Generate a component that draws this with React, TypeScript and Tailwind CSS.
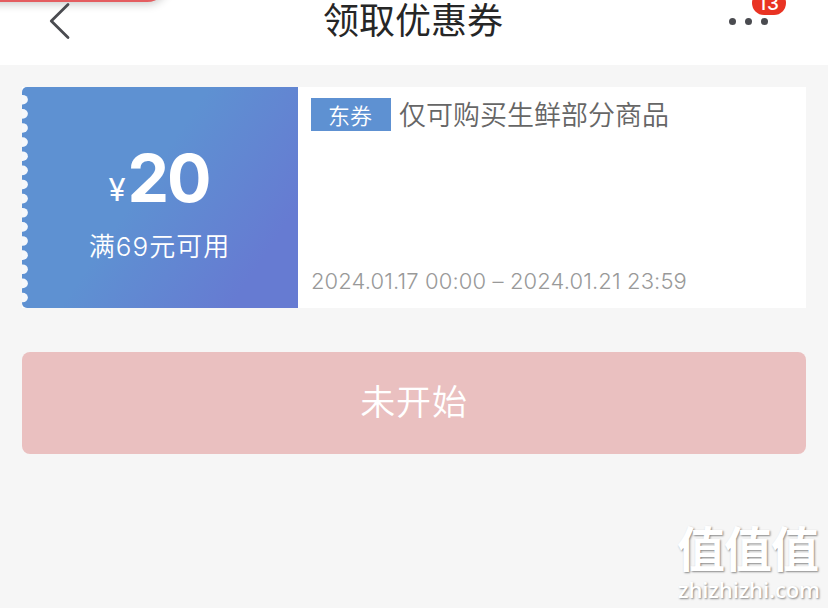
const notches = Array.from({ length: 15 }, (_, i) => 12.7 + i * 14.13);

function Header() {
  return (
    <header className="relative flex h-[65px] items-start justify-center bg-white">
      <div className="absolute -top-10 -left-8 h-[42px] w-[200px] rounded-full bg-[#e45d60] shadow-[0_2px_10px_rgba(0,0,0,0.22)]" />
      <svg className="absolute top-0 left-[46px]" width="28" height="42" viewBox="0 0 28 42" fill="none" stroke="#4a4b50" strokeWidth="2.8" strokeLinecap="round" strokeLinejoin="round">
        <path d="M22 4.5 5.3 21 22 37.5" />
      </svg>
      <h1 className="pt-px pr-[2px] text-[36px] leading-[40px] font-normal whitespace-nowrap text-[#262626]">领取优惠券</h1>
      <div className="absolute top-[18px] left-[729px] flex gap-[9px]">
        <i className="size-[7px] rounded-full bg-[#4a4b50]" />
        <i className="size-[7px] rounded-full bg-[#4a4b50]" />
        <i className="size-[7px] rounded-full bg-[#4a4b50]" />
      </div>
      <span className="absolute -top-[9px] left-[752px] flex h-6 w-[34px] items-center justify-center rounded-full bg-[#e93323] pt-[2px] text-[19px] leading-[22px] font-medium tracking-[0.8px] text-white">13</span>
    </header>
  );
}

function Coupon() {
  return (
    <section className="flex h-[221px] bg-white">
      <div className="relative flex w-[276px] flex-col items-center overflow-hidden rounded-l-[5px] bg-linear-[124deg,#5e91d2_0%,#5e91d2_44%,#667bd2_84%,#667bd2_100%] text-white">
        <svg className="absolute top-0 left-0" width="7" height="221" viewBox="0 0 7 221" fill="#f6f8fb">
          {notches.map((y) => (
            <ellipse key={y} cx="0.6" cy={y} rx="5.3" ry="4.8" />
          ))}
        </svg>
        <div className="mt-[55px] flex h-[72px] items-baseline pr-[2px] leading-[72px]">
          <span className="-translate-y-px text-[31px] font-normal">¥</span>
          <span className="ml-[2px] text-[66px] font-bold tracking-[-2px]">20</span>
        </div>
        <p className="mt-[14px] pr-px text-[26px] leading-[38px] tracking-[1px] whitespace-nowrap">满69元可用</p>
      </div>
      <div className="flex flex-1 flex-col justify-between pt-[11px] pb-[12px] pl-[13px]">
        <div className="flex items-center">
          <span className="flex h-[33px] w-[80px] items-center justify-center bg-[#5e91d2] pt-[3px] pr-[2px] text-[22px] leading-[30px] text-white">东券</span>
          <span className="ml-[8px] pt-[2px] text-[27px] leading-[31px] whitespace-nowrap text-[#666]">仅可购买生鲜部分商品</span>
        </div>
        <p className="text-[22px] leading-[30px] tracking-[0.12px] whitespace-nowrap text-[#999]">2024.01.17 00:00 – 2024.01.21 23:59</p>
      </div>
    </section>
  );
}

function Watermark() {
  return (
    <div className="absolute top-[522px] left-[677px] flex flex-col text-white [text-shadow:1px_1px_2px_rgba(0,0,0,0.45)]">
      <span className="text-[48px] leading-[56px] font-bold tracking-[-1px] whitespace-nowrap">值值值</span>
      <span className="ml-[1px] font-['Open_Sans',sans-serif] text-[22px] leading-[22px] font-semibold tracking-[-0.1px] whitespace-nowrap">zhizhizhi.com</span>
    </div>
  );
}

export default function App() {
  return (
    <div className="relative h-[608px] w-[828px] overflow-hidden bg-[#f6f6f6] font-['Inter','Noto_Sans_CJK_SC',sans-serif] font-[350]">
      <Header />
      <main className="flex flex-col gap-[44px] px-[22px] pt-[22px]">
        <Coupon />
        <button className="h-[102px] rounded-[8px] bg-[#eac0c0] pb-[2px] text-[35px] leading-[98px] font-[350] tracking-[0.8px] text-white">未开始</button>
      </main>
      <Watermark />
    </div>
  );
}
